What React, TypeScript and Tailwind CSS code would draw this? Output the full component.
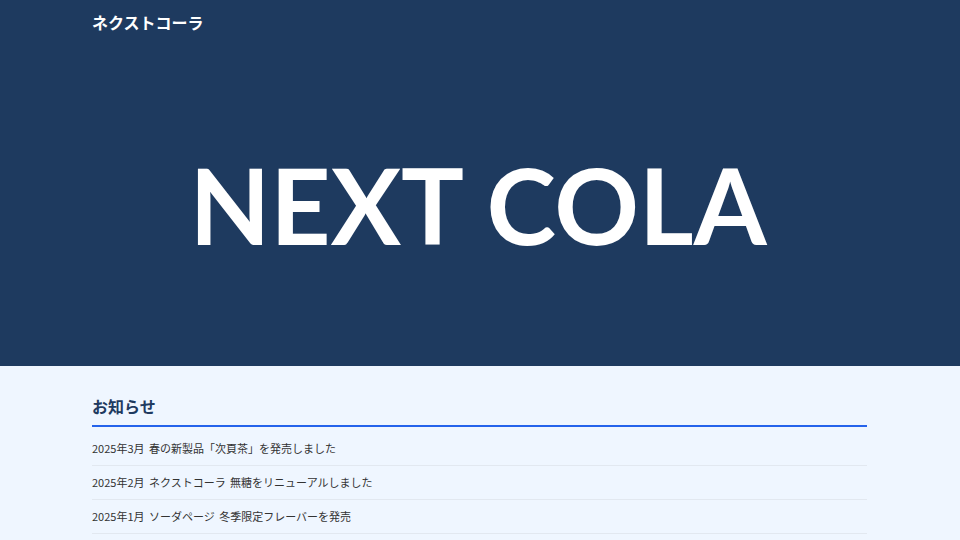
export default function App() {
  const news = [
    "2025年3月 春の新製品「次頁茶」を発売しました",
    "2025年2月 ネクストコーラ 無糖をリニューアルしました",
    "2025年1月 ソーダページ 冬季限定フレーバーを発売",
  ];
  return (
    <div className="min-h-[540px] bg-[#eff6ff] font-['Noto_Sans_CJK_JP',sans-serif]">
      <div className="bg-[#1e3a5f] h-[366px] flex flex-col">
        <header className="h-[44px] flex items-center pl-[92px] pr-[93px]">
          <span className="text-white font-bold text-[16px] leading-none">ネクストコーラ</span>
        </header>
        <div className="flex-1 flex items-center justify-center">
          <h1 className="text-white font-bold text-[105px] leading-none font-['Lato',sans-serif] pb-[2px] pr-[4px]">
            NEXT COLA
          </h1>
        </div>
      </div>
      <section className="pl-[92px] pr-[93px] pt-[26px]">
        <h2 className="text-[#1e3a5f] font-bold text-[16px] leading-[28px] pb-[5px] border-b-2 border-[#2563eb]">
          お知らせ
        </h2>
        <ul className="mt-[5px]">
          {news.map((n) => (
            <li
              key={n}
              className="text-[#333333] text-[11px] leading-[17px] py-[8px] border-b border-[#e2e8f0] [word-spacing:2px]"
            >
              {n}
            </li>
          ))}
        </ul>
      </section>
    </div>
  );
}
